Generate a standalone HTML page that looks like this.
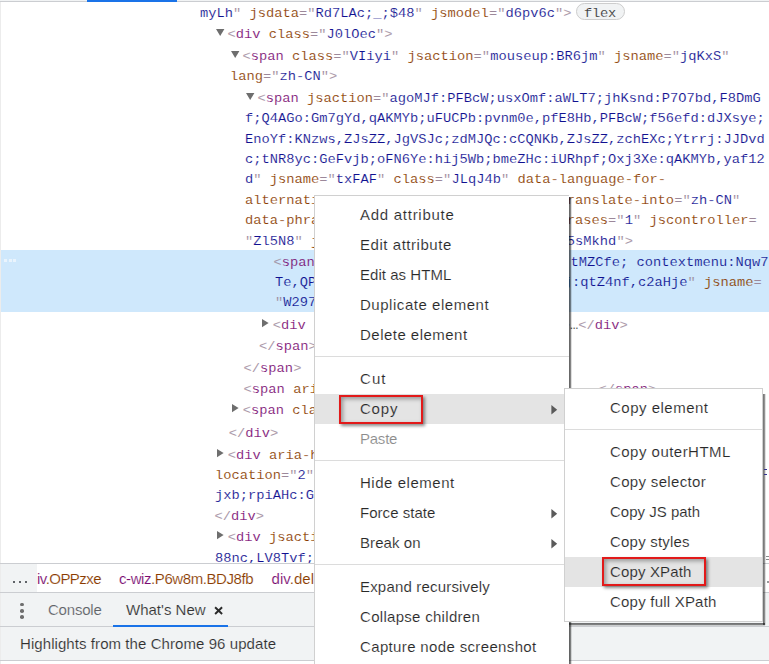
<!DOCTYPE html>
<html><head><meta charset="utf-8"><title>DevTools</title>
<style>
html,body{margin:0;padding:0;}
body{width:769px;height:664px;overflow:hidden;background:#fff;position:relative;font-family:"Liberation Sans",sans-serif;}
#root{position:absolute;left:0;top:0;width:769px;height:664px;overflow:hidden;background:#fff;}
.abs{position:absolute;}
.ln{position:absolute;white-space:pre;font-family:"Liberation Mono",monospace;font-size:13.75px;line-height:20px;height:20px;transform:scaleY(0.96);transform-origin:0 13.67px;}
.menu{position:absolute;background:#fff;border:1px solid #d0d0d0;box-sizing:border-box;padding:4px 0;}
.mi{position:relative;height:30px;line-height:30px;font-size:15px;color:#292929;white-space:nowrap;}
.mi span.t{position:absolute;left:0;top:0;display:inline-block;}
.mi.hl{background:#e4e4e4;}
.mi span.t{-webkit-text-stroke:0.14px #fff;}
.mi.hl span.t{-webkit-text-stroke:0.14px #e4e4e4;}
.mi.dis{color:#8c8c8c;}
.sep{height:14px;position:relative;}
.sep:after{content:"";position:absolute;left:0;right:0;top:6px;height:1px;background:#dcdcdc;}
.redbox{position:absolute;box-sizing:border-box;border:2px solid #e21a1a;box-shadow:2px 2px 3px rgba(0,0,0,.45), inset 2px 2px 4px rgba(0,0,0,.34);}
.sans{font-family:"Liberation Sans",sans-serif;white-space:nowrap;position:absolute;}
</style></head><body><div id="root">

<div class="abs" style="left:0;top:0;width:769px;height:1px;background:#f1f3f4"></div>
<div class="abs" style="left:0;top:1px;width:769px;height:1px;background:#cbcdd1"></div>
<div class="abs" style="left:87px;top:0;width:90px;height:2px;background:#1a73e8"></div>
<div class="abs" style="left:0;top:2px;width:1px;height:662px;background:#ececec"></div>
<div class="abs" style="left:1px;top:250px;width:768px;height:62px;background:#cfe8fc"></div>
<div class="abs" style="left:4.0px;top:259px;width:3px;height:3px;background:#eaf4fd"></div>
<div class="abs" style="left:8.5px;top:259px;width:3px;height:3px;background:#eaf4fd"></div>
<div class="abs" style="left:13.0px;top:259px;width:3px;height:3px;background:#eaf4fd"></div>
<div class="ln" style="left:200.00px;top:3.63px;-webkit-text-stroke:0.14px #ffffff"><span style="color:#101090">myLh</span><span style="color:#9c889a">"</span><span style="color:#8a3c00"> jsdata</span><span style="color:#9c889a">="</span><span style="color:#101090">Rd7LAc;_;$48</span><span style="color:#9c889a">"</span><span style="color:#8a3c00"> jsmodel</span><span style="color:#9c889a">="</span><span style="color:#101090">d6pv6c</span><span style="color:#9c889a">"&gt;</span></div>
<div class="ln" style="left:227.50px;top:24.53px;-webkit-text-stroke:0.14px #ffffff"><span style="color:#9c889a">&lt;</span><span style="color:#7a0c72">div</span><span style="color:#8a3c00"> class</span><span style="color:#9c889a">="</span><span style="color:#101090">J0lOec</span><span style="color:#9c889a">"&gt;</span></div>
<svg class="abs" style="left:216.00px;top:29.00px" width="9" height="8" viewBox="0 0 9 8"><polygon points="0,0 8.4,0 4.2,7" fill="#6e6e6e"/></svg>
<div class="ln" style="left:242.50px;top:46.93px;-webkit-text-stroke:0.14px #ffffff"><span style="color:#9c889a">&lt;</span><span style="color:#7a0c72">span</span><span style="color:#8a3c00"> class</span><span style="color:#9c889a">="</span><span style="color:#101090">VIiyi</span><span style="color:#9c889a">"</span><span style="color:#8a3c00"> jsaction</span><span style="color:#9c889a">="</span><span style="color:#101090">mouseup:BR6jm</span><span style="color:#9c889a">"</span><span style="color:#8a3c00"> jsname</span><span style="color:#9c889a">="</span><span style="color:#101090">jqKxS</span><span style="color:#9c889a">"</span></div>
<svg class="abs" style="left:231.00px;top:51.40px" width="9" height="8" viewBox="0 0 9 8"><polygon points="0,0 8.4,0 4.2,7" fill="#6e6e6e"/></svg>
<div class="ln" style="left:230.00px;top:66.83px;-webkit-text-stroke:0.14px #ffffff"><span style="color:#8a3c00">lang</span><span style="color:#9c889a">="</span><span style="color:#101090">zh-CN</span><span style="color:#9c889a">"&gt;</span></div>
<div class="ln" style="left:257.50px;top:88.63px;-webkit-text-stroke:0.14px #ffffff"><span style="color:#9c889a">&lt;</span><span style="color:#7a0c72">span</span><span style="color:#8a3c00"> jsaction</span><span style="color:#9c889a">="</span><span style="color:#101090">agoMJf:PFBcW;usxOmf:aWLT7;jhKsnd:P7O7bd,F8DmG</span></div>
<svg class="abs" style="left:246.00px;top:93.10px" width="9" height="8" viewBox="0 0 9 8"><polygon points="0,0 8.4,0 4.2,7" fill="#6e6e6e"/></svg>
<div class="ln" style="left:245.00px;top:108.73px;-webkit-text-stroke:0.14px #ffffff"><span style="color:#101090">f;Q4AGo:Gm7gYd,qAKMYb;uFUCPb:pvnm0e,pfE8Hb,PFBcW;f56efd:dJXsye;</span></div>
<div class="ln" style="left:245.00px;top:130.03px;-webkit-text-stroke:0.14px #ffffff"><span style="color:#101090">EnoYf:KNzws,ZJsZZ,JgVSJc;zdMJQc:cCQNKb,ZJsZZ,zchEXc;Ytrrj:JJDvd</span></div>
<div class="ln" style="left:245.00px;top:150.03px;-webkit-text-stroke:0.14px #ffffff"><span style="color:#101090">c;tNR8yc:GeFvjb;oFN6Ye:hij5Wb;bmeZHc:iURhpf;Oxj3Xe:qAKMYb,yaf12</span></div>
<div class="ln" style="left:245.00px;top:170.43px;-webkit-text-stroke:0.14px #ffffff"><span style="color:#101090">d</span><span style="color:#9c889a">"</span><span style="color:#8a3c00"> jsname</span><span style="color:#9c889a">="</span><span style="color:#101090">txFAF</span><span style="color:#9c889a">"</span><span style="color:#8a3c00"> class</span><span style="color:#9c889a">="</span><span style="color:#101090">JLqJ4b</span><span style="color:#9c889a">"</span><span style="color:#8a3c00"> data-language-for-</span></div>
<div class="ln" style="left:245.00px;top:190.63px;-webkit-text-stroke:0.14px #ffffff"><span style="color:#8a3c00">alternatives</span><span style="color:#9c889a">="</span><span style="color:#101090">zh-CN</span><span style="color:#9c889a">"</span><span style="color:#8a3c00"> data-language-to-translate-into</span><span style="color:#9c889a">="</span><span style="color:#101090">zh-CN</span><span style="color:#9c889a">"</span></div>
<div class="ln" style="left:245.00px;top:210.93px;-webkit-text-stroke:0.14px #ffffff"><span style="color:#8a3c00">data-phrase-index</span><span style="color:#9c889a">="</span><span style="color:#101090">0</span><span style="color:#9c889a">"</span><span style="color:#8a3c00"> data-number-of-phrases</span><span style="color:#9c889a">="</span><span style="color:#101090">1</span><span style="color:#9c889a">"</span><span style="color:#8a3c00"> jscontroller</span><span style="color:#9c889a">=</span></div>
<div class="ln" style="left:245.00px;top:231.83px;-webkit-text-stroke:0.14px #ffffff"><span style="color:#9c889a">"</span><span style="color:#101090">Zl5N8</span><span style="color:#9c889a">"</span><span style="color:#8a3c00"> jsdata</span><span style="color:#9c889a">="</span><span style="color:#101090">Rd7LAc;_;$49;lmtUUe;_;$5sMkhd</span><span style="color:#9c889a">"&gt;</span></div>
<div class="ln" style="left:273.50px;top:252.73px;-webkit-text-stroke:0.14px #cfe8fc"><span style="color:#9c889a">&lt;</span><span style="color:#7a0c72">span</span><span style="color:#8a3c00"> jsaction</span><span style="color:#9c889a">="</span><span style="color:#101090">click:qtZ4nf,GFf3ac,tMZCfe; contextmenu:Nqw7</span></div>
<div class="ln" style="left:275.00px;top:272.83px;-webkit-text-stroke:0.14px #cfe8fc"><span style="color:#101090">Te,QPCM7d;keydown:RDtNu;mouseup:BR6j:qtZ4nf,c2aHje</span><span style="color:#9c889a">"</span><span style="color:#8a3c00"> jsname</span><span style="color:#9c889a">=</span></div>
<div class="ln" style="left:275.00px;top:293.23px;-webkit-text-stroke:0.14px #cfe8fc"><span style="color:#9c889a">"</span><span style="color:#101090">W297wb</span><span style="color:#9c889a">"&gt;</span></div>
<div class="ln" style="left:272.80px;top:315.83px;-webkit-text-stroke:0.14px #ffffff"><span style="color:#9c889a">&lt;</span><span style="color:#7a0c72">div</span><span style="color:#8a3c00"> class</span><span style="color:#9c889a">="</span><span style="color:#101090">J0lOec</span><span style="color:#9c889a">"</span><span style="color:#8a3c00"> jsname</span><span style="color:#9c889a">="</span><span style="color:#101090">r5xl4</span><span style="color:#101090">x</span><span style="color:#9c889a">"&gt;</span><span style="color:#303030">…</span><span style="color:#9c889a">&lt;/</span><span style="color:#7a0c72">div</span><span style="color:#9c889a">&gt;</span></div>
<svg class="abs" style="left:262.00px;top:318.80px" width="8" height="9" viewBox="0 0 8 9"><polygon points="0,0 6.6,4.1 0,8.2" fill="#6e6e6e"/></svg>
<div class="ln" style="left:259.00px;top:337.23px;-webkit-text-stroke:0.14px #ffffff"><span style="color:#9c889a">&lt;/</span><span style="color:#7a0c72">span</span><span style="color:#9c889a">&gt;</span></div>
<div class="ln" style="left:243.60px;top:359.13px;-webkit-text-stroke:0.14px #ffffff"><span style="color:#9c889a">&lt;/</span><span style="color:#7a0c72">span</span><span style="color:#9c889a">&gt;</span></div>
<div class="ln" style="left:243.60px;top:380.43px;-webkit-text-stroke:0.14px #ffffff"><span style="color:#9c889a">&lt;</span><span style="color:#7a0c72">span</span><span style="color:#8a3c00"> aria-hidden</span><span style="color:#9c889a">="</span><span style="color:#101090">true</span><span style="color:#9c889a">"</span><span style="color:#8a3c00"> class</span><span style="color:#9c889a">="</span><span style="color:#101090">ZTPlm</span><span style="color:#9c889a">"&gt;</span><span style="color:#303030">…   </span><span style="color:#9c889a">&lt;/</span><span style="color:#7a0c72">span</span><span style="color:#9c889a">&gt;</span></div>
<div class="ln" style="left:242.80px;top:401.43px;-webkit-text-stroke:0.14px #ffffff"><span style="color:#9c889a">&lt;</span><span style="color:#7a0c72">span</span><span style="color:#8a3c00"> class</span><span style="color:#9c889a">="</span><span style="color:#101090">aia4Ud</span><span style="color:#9c889a">"</span><span style="color:#9c889a">&gt;</span></div>
<svg class="abs" style="left:232.00px;top:404.40px" width="8" height="9" viewBox="0 0 8 9"><polygon points="0,0 6.6,4.1 0,8.2" fill="#6e6e6e"/></svg>
<div class="ln" style="left:228.70px;top:423.63px;-webkit-text-stroke:0.14px #ffffff"><span style="color:#9c889a">&lt;/</span><span style="color:#7a0c72">div</span><span style="color:#9c889a">&gt;</span></div>
<div class="ln" style="left:227.70px;top:445.53px;-webkit-text-stroke:0.14px #ffffff"><span style="color:#9c889a">&lt;</span><span style="color:#7a0c72">div</span><span style="color:#8a3c00"> aria-hidden</span><span style="color:#9c889a">="</span><span style="color:#101090">true</span></div>
<svg class="abs" style="left:216.90px;top:448.50px" width="8" height="9" viewBox="0 0 8 9"><polygon points="0,0 6.6,4.1 0,8.2" fill="#6e6e6e"/></svg>
<div class="ln" style="left:215.00px;top:465.53px;-webkit-text-stroke:0.14px #ffffff"><span style="color:#8a3c00">location</span><span style="color:#9c889a">="</span><span style="color:#101090">2</span><span style="color:#9c889a">"</span><span style="color:#8a3c00"> jsaction</span><span style="color:#9c889a">="</span><span style="color:#101090">x</span><span style="color:#9c889a">"</span></div>
<div class="ln" style="left:215.00px;top:485.53px;-webkit-text-stroke:0.14px #ffffff"><span style="color:#101090">jxb;rpiAHc:G2bGQb</span></div>
<div class="ln" style="left:214.50px;top:506.73px;-webkit-text-stroke:0.14px #ffffff"><span style="color:#9c889a">&lt;/</span><span style="color:#7a0c72">div</span><span style="color:#9c889a">&gt;</span></div>
<div class="ln" style="left:227.70px;top:528.23px;-webkit-text-stroke:0.14px #ffffff"><span style="color:#9c889a">&lt;</span><span style="color:#7a0c72">div</span><span style="color:#8a3c00"> jsaction</span><span style="color:#9c889a">="</span><span style="color:#101090">copy:zVnXqd</span></div>
<svg class="abs" style="left:216.90px;top:531.20px" width="8" height="9" viewBox="0 0 8 9"><polygon points="0,0 6.6,4.1 0,8.2" fill="#6e6e6e"/></svg>
<div class="ln" style="left:215.00px;top:549.03px;-webkit-text-stroke:0.14px #ffffff"><span style="color:#101090">88nc,LV8Tvf;CmVOgc:FzgWvd</span></div>
<div class="abs" style="left:576px;top:2.6px;width:49px;height:17.6px;box-sizing:border-box;border:1px solid #cdcdcd;border-radius:9px;background:#f1f3f4"></div>
<div class="ln" style="left:584px;top:3.63px;color:#303030;letter-spacing:-0.25px;-webkit-text-stroke:0.14px #f1f3f4">flex</div>
<div class="abs" style="left:0;top:563px;width:769px;height:1px;background:#cbcdd1"></div>
<div class="abs" style="left:1px;top:564px;width:768px;height:28px;background:#fff"></div>
<div class="abs" style="left:1px;top:564px;width:36px;height:28px;background:#f1f3f4"></div>
<div class="abs" style="left:12.5px;top:581px;width:2.6px;height:2px;background:#5f6368"></div>
<div class="abs" style="left:18.5px;top:581px;width:2.6px;height:2px;background:#5f6368"></div>
<div class="abs" style="left:24.5px;top:581px;width:2.6px;height:2px;background:#5f6368"></div>
<div class="sans" id="bc1" style="font-size:15px;line-height:28px;top:565px;-webkit-text-stroke:0.14px #fff;left:37px;letter-spacing:-0.540px"><span style="color:#7a0c72">iv</span><span style="color:#8a3c00">.OPPzxe</span></div>
<div class="sans" id="bc2" style="font-size:15px;line-height:28px;top:565px;-webkit-text-stroke:0.14px #fff;left:119px;letter-spacing:-0.419px"><span style="color:#7a0c72">c-wiz</span><span style="color:#8a3c00">.P6w8m.BDJ8fb</span></div>
<div class="sans" id="bc3" style="font-size:15px;line-height:28px;top:565px;-webkit-text-stroke:0.14px #fff;left:271.5px;letter-spacing:0.05px"><span style="color:#7a0c72">div</span><span style="color:#8a3c00">.delete</span></div>
<div class="abs" style="left:0;top:592px;width:769px;height:1px;background:#cbcdd1"></div>
<div class="abs" style="left:1px;top:593px;width:768px;height:71px;background:#f1f3f4"></div>
<div class="abs" style="left:0;top:626px;width:769px;height:1px;background:#cbcdd1"></div>
<div class="abs" style="left:0;top:660px;width:769px;height:1px;background:#cbcdd1"></div>
<div class="abs" style="left:1px;top:661px;width:768px;height:3px;background:#fff"></div>
<div class="abs" style="left:20px;top:602.8px;width:3.6px;height:3.6px;border-radius:50%;background:#6e6e6e"></div>
<div class="abs" style="left:20px;top:609.0px;width:3.6px;height:3.6px;border-radius:50%;background:#6e6e6e"></div>
<div class="abs" style="left:20px;top:615.2px;width:3.6px;height:3.6px;border-radius:50%;background:#6e6e6e"></div>
<div class="sans" id="tab1" style="-webkit-text-stroke:0.14px #f1f3f4;font-size:15px;line-height:33px;top:593px;left:48px;color:#5f6368;letter-spacing:-0.208px">Console</div>
<div class="sans" id="tab2" style="-webkit-text-stroke:0.14px #f1f3f4;font-size:15px;line-height:33px;top:593px;left:126px;color:#333;letter-spacing:0.004px">What's New</div>
<svg class="abs" style="left:213px;top:604.5px" width="11" height="11" viewBox="0 0 11 11"><path d="M2.1 2.2 L9.1 9.0 M9.1 2.2 L2.1 9.0" stroke="#2a2a2a" stroke-width="1.9" fill="none"/></svg>
<div class="abs" style="left:113px;top:624.5px;width:115px;height:2px;background:#1a73e8"></div>
<div class="sans" id="hl" style="-webkit-text-stroke:0.14px #f1f3f4;font-size:15px;line-height:33px;top:627px;left:20px;color:#303030;letter-spacing:0.072px">Highlights from the Chrome 96 update</div>
<div class="abs" style="left:568.5px;top:197px;width:3.2px;height:470px;background:linear-gradient(90deg,rgba(0,0,0,.62) 0%,rgba(0,0,0,.55) 45%,rgba(0,0,0,.18) 75%,rgba(0,0,0,.03) 100%)"></div>
<div class="menu" style="left:314px;top:195px;width:254.5px;border-right:none;"><div class="mi "><span class="t" id="m0" style="left:45px;letter-spacing:0.728px">Add attribute</span></div><div class="mi "><span class="t" id="m1" style="left:45px;letter-spacing:0.545px">Edit attribute</span></div><div class="mi "><span class="t" id="m2" style="left:45px;letter-spacing:0.040px">Edit as HTML</span></div><div class="mi "><span class="t" id="m3" style="left:45px;letter-spacing:0.533px">Duplicate element</span></div><div class="mi "><span class="t" id="m4" style="left:45px;letter-spacing:0.476px">Delete element</span></div><div class="sep"></div><div class="mi "><span class="t" id="m6" style="left:45px;letter-spacing:1.078px">Cut</span></div><div class="mi hl"><span class="t" id="m7" style="left:45px;letter-spacing:0.790px">Copy</span><svg class="abs" style="left:236px;top:10.5px" width="7" height="10" viewBox="0 0 7 10"><polygon points="0.4,0 6.2,4.7 0.4,9.4" fill="#5a5a5a"/></svg></div><div class="mi dis"><span class="t" id="m8" style="left:45px;letter-spacing:-0.240px">Paste</span></div><div class="sep"></div><div class="mi "><span class="t" id="m10" style="left:45px;letter-spacing:0.537px">Hide element</span></div><div class="mi "><span class="t" id="m11" style="left:45px;letter-spacing:0.037px">Force state</span><svg class="abs" style="left:236px;top:10.5px" width="7" height="10" viewBox="0 0 7 10"><polygon points="0.4,0 6.2,4.7 0.4,9.4" fill="#5a5a5a"/></svg></div><div class="mi "><span class="t" id="m12" style="left:45px;letter-spacing:0.079px">Break on</span><svg class="abs" style="left:236px;top:10.5px" width="7" height="10" viewBox="0 0 7 10"><polygon points="0.4,0 6.2,4.7 0.4,9.4" fill="#5a5a5a"/></svg></div><div class="sep"></div><div class="mi "><span class="t" id="m14" style="left:45px;letter-spacing:0.180px">Expand recursively</span></div><div class="mi "><span class="t" id="m15" style="left:45px;letter-spacing:0.295px">Collapse children</span></div><div class="mi "><span class="t" id="m16" style="left:45px;letter-spacing:0.352px">Capture node screenshot</span></div><div class="sep"></div><div class="mi "><span class="t" id="m18" style="left:45px;letter-spacing:0.184px">Store as global variable</span></div></div>
<div class="redbox" style="left:339px;top:394.8px;width:83.6px;height:28.8px"></div>
<div class="abs" style="left:763px;top:394px;width:3px;height:231.4px;background:linear-gradient(90deg,rgba(0,0,0,.55) 0%,rgba(0,0,0,.48) 45%,rgba(0,0,0,.15) 78%,rgba(0,0,0,.03) 100%)"></div>
<div class="abs" style="left:569px;top:622.6px;width:196.4px;height:3.6px;background:linear-gradient(180deg,rgba(0,0,0,.55) 0%,rgba(0,0,0,.48) 50%,rgba(0,0,0,.18) 80%,rgba(0,0,0,.04) 100%)"></div>
<div class="menu" style="left:564px;top:388px;width:199px;"><div class="mi "><span class="t" id="s0" style="left:45px;letter-spacing:0.494px">Copy element</span></div><div class="sep"></div><div class="mi "><span class="t" id="s2" style="left:45px;letter-spacing:0.475px">Copy outerHTML</span></div><div class="mi "><span class="t" id="s3" style="left:45px;letter-spacing:0.332px">Copy selector</span></div><div class="mi "><span class="t" id="s4" style="left:45px;letter-spacing:0.003px">Copy JS path</span></div><div class="mi "><span class="t" id="s5" style="left:45px;letter-spacing:0.207px">Copy styles</span></div><div class="mi hl"><span class="t" id="s6" style="left:45px;letter-spacing:0.139px">Copy XPath</span></div><div class="mi "><span class="t" id="s7" style="left:45px;letter-spacing:0.215px">Copy full XPath</span></div></div>
<div class="redbox" style="left:601.8px;top:557px;width:103.8px;height:29px"></div>
<div class="abs" style="left:764.2px;top:468.6px;width:2.6px;height:1.4px;background:#34348e"></div>
<div class="abs" style="left:764.2px;top:473.6px;width:2.6px;height:1.4px;background:#34348e"></div>
<div class="abs" style="left:766px;top:556.4px;width:3px;height:1px;background:#8a8a8a"></div>
<div class="abs" style="left:766px;top:558.8px;width:3px;height:1px;background:#8a8a8a"></div>
<div class="abs" style="left:766.5px;top:581.4px;width:2.5px;height:1.2px;background:#9a9a9a"></div>
</div></body></html>
